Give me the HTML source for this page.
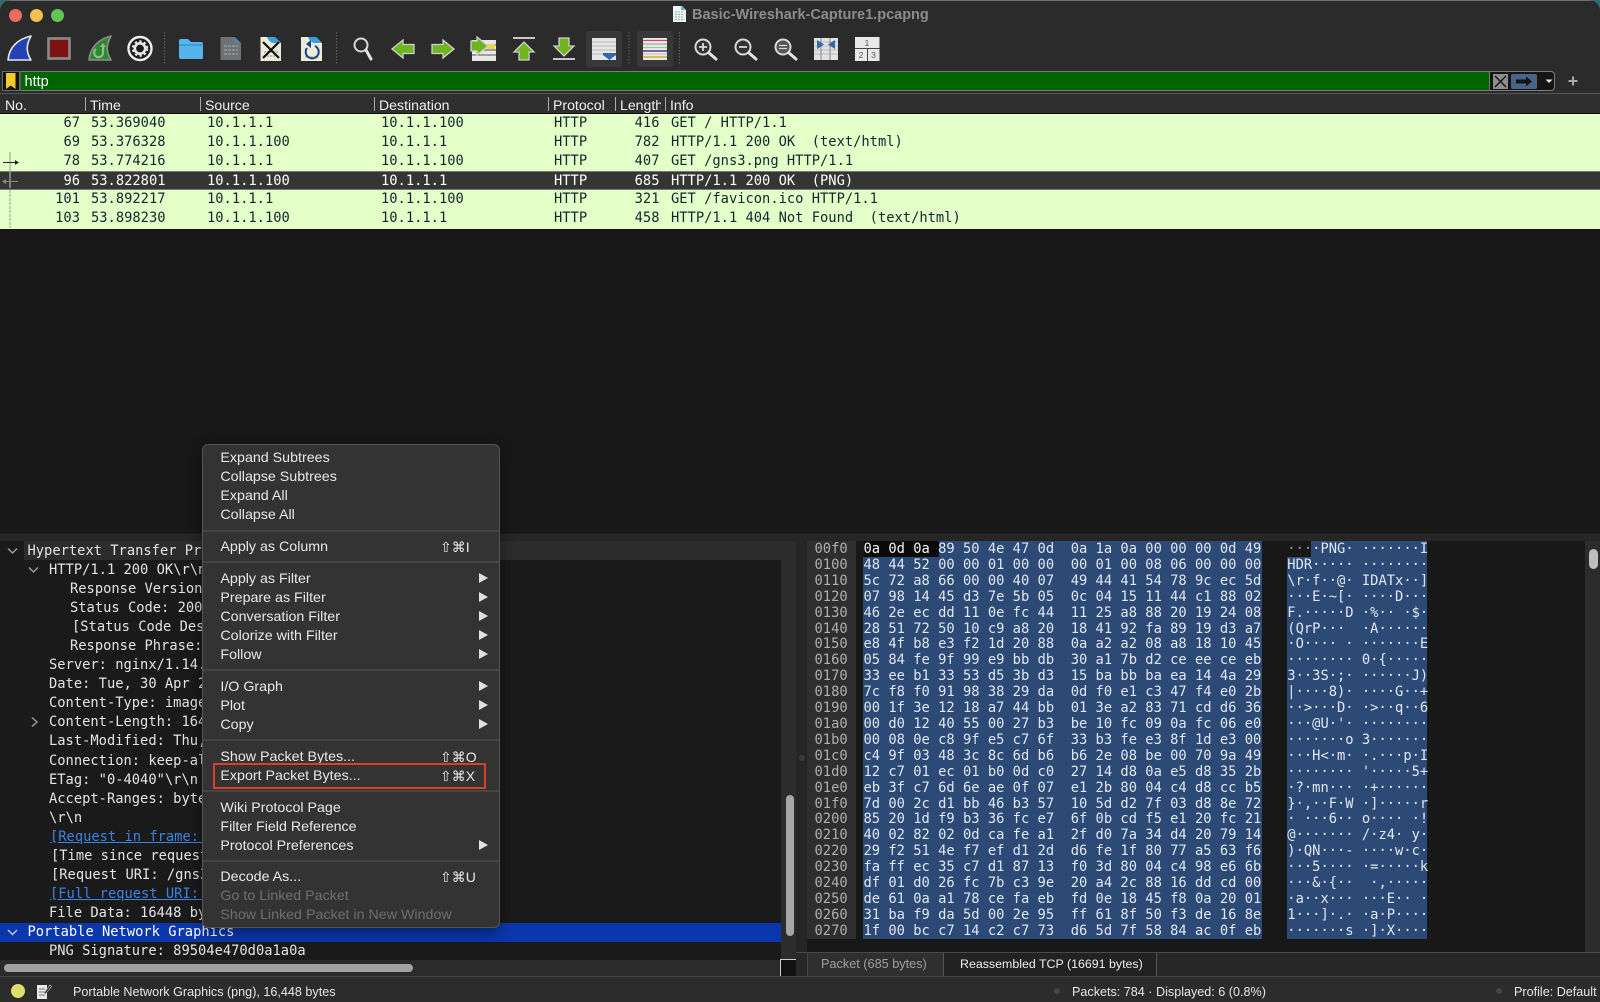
<!DOCTYPE html>
<html><head><meta charset="utf-8"><title>Basic-Wireshark-Capture1.pcapng</title>
<style>
html,body{margin:0;padding:0;background:#2f6b6b;width:1600px;height:1002px;overflow:hidden;}
#w{position:relative;width:1600px;height:1002px;overflow:hidden;background:#2b2b2b;border-radius:11px 11px 0 0;font-family:"Liberation Sans",sans-serif;}
.a{position:absolute;}
.m{font-family:"DejaVu Sans Mono","Liberation Mono",monospace;font-size:13.75px;white-space:pre;}
.h{position:absolute;top:95px;height:18px;line-height:20px;font-size:14.1px;color:#f0f0f0;}
.s{position:absolute;top:97px;width:1px;height:14px;background:#a8a8a8;}
.r{position:absolute;left:0;width:1600px;height:19.1px;line-height:19.1px;background:#e4ffc7;color:#12272e;}
.r span{position:absolute;top:0;}
.r .n{left:0;width:80px;text-align:right;}
.r .t{left:91px;}.r .src{left:207px;}.r .d{left:381px;}.r .p{left:554px;}
.r .l{left:600px;width:59.5px;text-align:right;}.r .i{left:671px;}
.r.sel{background:#353535;color:#fff;border-top:1px solid #777;border-bottom:1px solid #777;box-sizing:border-box;line-height:18px;height:19px;}
#tree{white-space:normal;}
#tree div{position:relative;height:19.1px;line-height:19.1px;color:#e3e3e3;}
#tree div span{position:absolute;top:0;white-space:pre;}
#tree .lnk{color:#3b83e6;text-decoration:underline;}
#menu{position:absolute;left:202px;top:444px;width:298px;height:484px;background:#333;border:1px solid #555;border-radius:6px;box-sizing:border-box;box-shadow:0 4px 14px rgba(0,0,0,.45);}
.mi{position:absolute;left:17.4px;height:19px;line-height:19px;font-size:14.25px;color:#e8e8e8;white-space:nowrap;}
.mi.dis{color:#6e6e6e;}
.ms{position:absolute;left:0;width:296px;height:2px;background:#444;}
.ar{position:absolute;left:276px;width:0;height:0;border-left:9px solid #e0e0e0;border-top:5px solid transparent;border-bottom:5px solid transparent;}
.sc{position:absolute;left:237px;height:19px;line-height:19px;font-size:14px;color:#e8e8e8;font-family:"Liberation Sans","DejaVu Sans",sans-serif;white-space:nowrap;}
.hx{position:absolute;line-height:15.9px;color:#dfe6ef;font-size:13.78px;margin:0;}
.st{position:absolute;top:980px;height:22px;line-height:24px;font-size:12.6px;color:#e6e6e6;white-space:nowrap;}
</style></head><body>
<div id="w">
<!-- title bar -->
<div class="a" style="left:0;top:0;width:1600px;height:1px;background:#6e6e6e"></div>
<div class="a" style="left:8.5px;top:8.5px;width:13px;height:13px;border-radius:50%;background:#ec6a5e"></div>
<div class="a" style="left:29.5px;top:8.5px;width:13px;height:13px;border-radius:50%;background:#f4bf4f"></div>
<div class="a" style="left:50.5px;top:8.5px;width:13px;height:13px;border-radius:50%;background:#61c554"></div>
<svg class="a" style="left:672px;top:5px" width="15" height="18" viewBox="0 0 15 18"><path d="M1 1H10L14 5V17H1Z" fill="#eef3f5"/><path d="M9 1L14 5H9Z" fill="#5fb0e0"/><path d="M3 7H12M3 9.5H12M3 12H12M3 14.5H12" stroke="#9aa" stroke-width="1" stroke-dasharray="2 1"/></svg>
<div class="a" style="left:692px;top:6px;height:19px;line-height:19px;font-size:14.5px;font-weight:bold;color:#8c8c8c;white-space:nowrap">Basic-Wireshark-Capture1.pcapng</div>

<!-- toolbar -->
<div class="a" style="left:586px;top:31px;width:36px;height:36px;background:#383838;border-radius:3px"></div>
<div class="a" style="left:637px;top:31px;width:36px;height:36px;background:#383838;border-radius:3px"></div>
<svg class="a" style="left:0;top:25px" width="900" height="46" viewBox="0 25 900 46">
<!-- shark -->
<path d="M8 60C9 47 18 39 31 36C26 45 26 52 31 60Z" fill="#2342b5" stroke="#e6e6e6" stroke-width="1.6" stroke-linejoin="round"/>
<!-- stop -->
<rect x="48.5" y="38.5" width="21" height="20" fill="#7d1212" stroke="#8b8b8b" stroke-width="2.6"/>
<!-- restart -->
<path d="M89 60C90 47 99 39 111 36C106 45 106 52 111 60Z" fill="#2c8a2c" stroke="#8e8e8e" stroke-width="1.6" stroke-linejoin="round"/>
<path d="M103 46V52A4.500 4.500 0 1 1 96 49" fill="none" stroke="#8fbc8f" stroke-width="2.2"/>
<path d="M100 47L103 43L106 47Z" fill="#8fbc8f"/>
<!-- gear -->
<circle cx="140" cy="48.5" r="11.5" fill="#1d1d1d" stroke="#efefef" stroke-width="2.4"/>
<circle cx="140" cy="48.5" r="5.2" fill="none" stroke="#e8e8e8" stroke-width="2.6"/>
<circle cx="140" cy="48.5" r="7.2" fill="none" stroke="#e8e8e8" stroke-width="2" stroke-dasharray="2.4 2.3"/>
<!-- seps -->
<path d="M164.500 32V65M336.500 32V65M629 32V65M679.500 32V65" stroke="#606060" stroke-width="1" stroke-dasharray="1.500 1.500"/>
<!-- folder -->
<path d="M179 41Q179 39 181 39H188L191 42H201Q203 42 203 44V58Q203 59 201 59H181Q179 59 179 57Z" fill="#55b4ec"/>
<path d="M179 44H203V46H179Z" fill="#3f9cd8"/>
<!-- gray file -->
<path d="M220.500 37H235L241 43V60H220.500Z" fill="#6e7272"/><path d="M233 37L241 43H233Z" fill="#4a86a8"/>
<path d="M224 46H238M224 50H238M224 54H238" stroke="#8d9090" stroke-width="2" stroke-dasharray="3 1"/>
<!-- X file -->
<path d="M260.500 37H275L281 43V61H260.500Z" fill="#ececd8"/><path d="M267 37H275L281 43H273Q269 42 267 37Z" fill="#39a0d8"/>
<path d="M264 52H278M264 56H278" stroke="#aaa" stroke-width="1.500" stroke-dasharray="2 1"/>
<path d="M263 42L279 58M279 42L263 58" stroke="#111" stroke-width="2.200"/>
<!-- reload file -->
<path d="M301 37H316L322 43V61H301Z" fill="#ececd8"/><path d="M308 37H316L322 43H314Q310 42 308 37Z" fill="#39a0d8"/>
<path d="M305 57H318" stroke="#aaa" stroke-width="1.500" stroke-dasharray="2 1"/>
<path d="M315 46A6.500 6.500 0 1 1 307 48" fill="none" stroke="#16448c" stroke-width="2"/>
<path d="M311 40L306 44L311 48Z" fill="#16448c"/>
<!-- search -->
<circle cx="361" cy="45" r="6.500" fill="#2c2c2c" stroke="#d8d8d8" stroke-width="2"/>
<path d="M366 50L371 59" stroke="#e4e4e4" stroke-width="3" stroke-linecap="round"/>
<!-- back/forward -->
<path d="M392 49L403 40V44.500H414V53.500H403V58Z" fill="#6eb51e" stroke="#d0d0d0" stroke-width="1.300"/>
<path d="M454 49L443 40V44.500H432V53.500H443V58Z" fill="#6eb51e" stroke="#d0d0d0" stroke-width="1.300"/>
<!-- go to packet -->
<rect x="472" y="40" width="24" height="21" fill="#e8e8e8"/>
<path d="M472 45H496M472 50H496M472 55H496" stroke="#555" stroke-width="1"/>
<rect x="487" y="44" width="8" height="5" fill="#e8d84a"/>
<path d="M488 46L477 37V41H471V51H477V55Z" fill="#6eb51e" stroke="#d0d0d0" stroke-width="1.300"/>
<!-- top / bottom -->
<path d="M513 38H535" stroke="#c8c8c8" stroke-width="2"/>
<path d="M524 42L534 52H529V60H519V52H514Z" fill="#6eb51e" stroke="#d0d0d0" stroke-width="1.300"/>
<path d="M553 59H575" stroke="#c8c8c8" stroke-width="2"/>
<path d="M564 56L574 46H569V38H559V46H554Z" fill="#6eb51e" stroke="#d0d0d0" stroke-width="1.300"/>
<!-- autoscroll -->
<rect x="592" y="38" width="24" height="22" fill="#e6e6e6"/>
<path d="M592 42H616M592 46H616M592 50H616M592 54H616" stroke="#bbb" stroke-width="1"/>
<path d="M603 55H616L609.500 60Z" fill="#2f68ad"/><rect x="603" y="53" width="13" height="2.500" fill="#2f68ad"/>
<!-- colorize -->
<rect x="643" y="38" width="24" height="22" fill="#eaeaea"/>
<path d="M643 40.500H667" stroke="#cc4a4a" stroke-width="1.300"/><path d="M643 44H667" stroke="#8fa8d8" stroke-width="1.300"/>
<path d="M643 47.500H667" stroke="#9ccf7c" stroke-width="1.300"/><path d="M643 51H667" stroke="#2a1a6a" stroke-width="1.300"/>
<path d="M643 54H667" stroke="#bbb" stroke-width="1"/><path d="M643 57H667" stroke="#d6a820" stroke-width="1.600"/>
<!-- zooms -->
<circle cx="703" cy="47" r="7.500" fill="#333" stroke="#d8d8d8" stroke-width="2"/><path d="M699 47H707M703 43V51" stroke="#d8d8d8" stroke-width="1.800"/><path d="M709 53L716 59" stroke="#e4e4e4" stroke-width="3" stroke-linecap="round"/>
<circle cx="743" cy="47" r="7.500" fill="#333" stroke="#d8d8d8" stroke-width="2"/><path d="M739 47H747" stroke="#d8d8d8" stroke-width="1.800"/><path d="M749 53L756 59" stroke="#e4e4e4" stroke-width="3" stroke-linecap="round"/>
<circle cx="783" cy="47" r="7.500" fill="#555" stroke="#d8d8d8" stroke-width="2"/><path d="M779 45.500H787M779 48.500H787" stroke="#d8d8d8" stroke-width="1.300"/><path d="M789 53L796 59" stroke="#e4e4e4" stroke-width="3" stroke-linecap="round"/>
<!-- resize -->
<rect x="814" y="38" width="24" height="22" fill="#e2e2e2"/><path d="M814 42H838M814 46H838M814 50H838M814 54H838" stroke="#bbb" stroke-width="1"/>
<path d="M821 38V60M830 38V60" stroke="#888" stroke-width="1"/>
<path d="M817 40L824 44.500L817 49ZM835 40L828 44.500L835 49Z" fill="#2f68ad"/>
<!-- panes -->
<rect x="855" y="37" width="24.500" height="24" fill="#e8e8e8"/><path d="M855 48.500H880M867.500 48.500V61" stroke="#444" stroke-width="1"/>
<text x="867" y="46" font-size="8.500" fill="#555" text-anchor="middle" font-family="Liberation Sans">1</text>
<text x="861" y="58" font-size="8.500" fill="#555" text-anchor="middle" font-family="Liberation Sans">2</text>
<text x="873.500" y="58" font-size="8.500" fill="#555" text-anchor="middle" font-family="Liberation Sans">3</text>
</svg>

<!-- filter -->
<div class="a" style="left:2px;top:71px;width:18px;height:20px;background:#111;border:1px solid #6a6a6a;box-sizing:border-box"></div>
<svg class="a" style="left:6px;top:73px" width="10" height="17" viewBox="0 0 10 17"><path d="M0 0H9.500V16L4.800 12.500L0 16Z" fill="#f3c92a"/></svg>
<div class="a" style="left:20px;top:71px;width:1470px;height:20px;background:#006400;border:1px solid #7a7a7a;border-left:1px solid #555;box-sizing:border-box;font-size:14.5px;line-height:21px;color:#fff;padding-left:3.5px">http</div>
<div class="a" style="left:1490px;top:71px;width:65px;height:20px;background:#151515;border:1px solid #7a7a7a;border-left:0;border-radius:0 4px 4px 0;box-sizing:border-box"></div>
<svg class="a" style="left:1493px;top:73px" width="64" height="17" viewBox="0 0 64 17">
<rect x="0" y="1" width="15" height="15" fill="#8e8e8e"/><path d="M2 3L13 14M13 3L2 14" stroke="#141414" stroke-width="1.400"/>
<rect x="18" y="1" width="26" height="15" rx="2" fill="#4a6488"/><path d="M23 6.500H33V3.500L39 8.500L33 13.500V10.500H23Z" fill="#141414"/>
<path d="M52.500 6.500H59.500L56 10Z" fill="#e8e8e8"/>
</svg>
<svg class="a" style="left:1567px;top:75px" width="12" height="12" viewBox="0 0 12 12"><path d="M6 1.500V10.500M1.500 6H10.500" stroke="#a8a8a8" stroke-width="2"/></svg>

<!-- header -->
<div class="a" style="left:0;top:93px;width:1600px;height:20px;background:#2f2f2f;border-top:1px solid #555;box-sizing:border-box"></div>
<div class="a" style="left:0;top:113px;width:1600px;height:1px;background:#0c0c0c"></div>
<div class="h" style="left:5px">No.</div><div class="s" style="left:85px"></div>
<div class="h" style="left:90px">Time</div><div class="s" style="left:200px"></div>
<div class="h" style="left:205px">Source</div><div class="s" style="left:374px"></div>
<div class="h" style="left:379px">Destination</div><div class="s" style="left:548px"></div>
<div class="h" style="left:553px">Protocol</div><div class="s" style="left:615px"></div>
<div class="h" style="left:620px;width:41px;overflow:hidden;white-space:nowrap">Length</div><div class="s" style="left:665px"></div>
<div class="h" style="left:670px">Info</div>

<!-- packet list -->
<div class="a" style="left:0;top:229px;width:1600px;height:304px;background:#181818"></div>
<div class="r m" style="top:113.500px"><span class="n">67</span><span class="t">53.369040</span><span class="src">10.1.1.1</span><span class="d">10.1.1.100</span><span class="p">HTTP</span><span class="l">416</span><span class="i">GET / HTTP/1.1</span></div>
<div class="r m" style="top:132.600px"><span class="n">69</span><span class="t">53.376328</span><span class="src">10.1.1.100</span><span class="d">10.1.1.1</span><span class="p">HTTP</span><span class="l">782</span><span class="i">HTTP/1.1 200 OK  (text/html)</span></div>
<div class="r m" style="top:151.700px"><span class="n">78</span><span class="t">53.774216</span><span class="src">10.1.1.1</span><span class="d">10.1.1.100</span><span class="p">HTTP</span><span class="l">407</span><span class="i">GET /gns3.png HTTP/1.1</span></div>
<div class="r m sel" style="top:171px"><span class="n">96</span><span class="t">53.822801</span><span class="src">10.1.1.100</span><span class="d">10.1.1.1</span><span class="p">HTTP</span><span class="l">685</span><span class="i">HTTP/1.1 200 OK  (PNG)</span></div>
<div class="r m" style="top:189.500px"><span class="n">101</span><span class="t">53.892217</span><span class="src">10.1.1.1</span><span class="d">10.1.1.100</span><span class="p">HTTP</span><span class="l">321</span><span class="i">GET /favicon.ico HTTP/1.1</span></div>
<div class="r m" style="top:208.600px;height:20px"><span class="n">103</span><span class="t">53.898230</span><span class="src">10.1.1.100</span><span class="d">10.1.1.1</span><span class="p">HTTP</span><span class="l">458</span><span class="i">HTTP/1.1 404 Not Found  (text/html)</span></div>
<svg class="a" style="left:0;top:150px" width="22" height="80" viewBox="0 0 22 80">
<path d="M10 2V30" stroke="#999" stroke-width="1"/>
<path d="M10 40V78" stroke="#999" stroke-width="1" stroke-dasharray="3 1"/>
<path d="M3 12.500H18" stroke="#222" stroke-width="1"/><path d="M15 10L19 12.500L15 15Z" fill="#222"/>
<path d="M10 22V38" stroke="#999" stroke-width="1.500"/>
<path d="M5 31.500H18" stroke="#888" stroke-width="1"/><path d="M6 29L2 31.500L6 34Z" fill="#888"/>
</svg>

<!-- divider -->
<div class="a" style="left:0;top:533px;width:1600px;height:8px;background:#262626;border-top:1px solid #1c1c1c;box-sizing:border-box"></div>

<!-- tree -->
<div class="a" style="left:0;top:541px;width:781px;height:419px;background:#1a1a1a"></div>
<div class="a" style="left:24px;top:541px;width:757px;height:19px;background:#2c2c2c"></div>
<div class="a" style="left:0;top:923px;width:781px;height:19px;background:#0a37ad"></div>
<div id="tree" class="a m" style="left:0;top:541.500px;width:781px;height:418px;overflow:hidden">
<div><span style="left:27.500px">Hypertext Transfer Protocol</span></div>
<div><span style="left:49px">HTTP/1.1 200 OK\r\n</span></div>
<div><span style="left:70px">Response Version: HTTP/1.1</span></div>
<div><span style="left:70px">Status Code: 200</span></div>
<div><span style="left:72px">[Status Code Description: OK]</span></div>
<div><span style="left:70px">Response Phrase: OK</span></div>
<div><span style="left:49px">Server: nginx/1.14.0</span></div>
<div><span style="left:49px">Date: Tue, 30 Apr 2019</span></div>
<div><span style="left:49px">Content-Type: image/png\r\n</span></div>
<div><span style="left:49px">Content-Length: 16448\r\n</span></div>
<div><span style="left:49px">Last-Modified: Thu, 25</span></div>
<div><span style="left:49px">Connection: keep-alive\r\n</span></div>
<div><span style="left:49px">ETag: "0-4040"\r\n</span></div>
<div><span style="left:49px">Accept-Ranges: bytes\r\n</span></div>
<div><span style="left:49px">\r\n</span></div>
<div><span class="lnk" style="left:50px">[Request in frame: 78]</span></div>
<div><span style="left:51px">[Time since request: 0.0</span></div>
<div><span style="left:51px">[Request URI: /gns3.png]</span></div>
<div><span class="lnk" style="left:50px">[Full request URI: http</span></div>
<div><span style="left:49px">File Data: 16448 bytes</span></div>
<div><span style="left:27.500px;color:#fff">Portable Network Graphics</span></div>
<div><span style="left:49px">PNG Signature: 89504e470d0a1a0a</span></div>
</div>
<svg class="a" style="left:0;top:541px" width="45" height="400" viewBox="0 541 45 400" fill="none" stroke-width="1.500">
<path d="M8 548.500L12.500 553L17 548.500" stroke="#9a9a9a"/>
<path d="M29 567.500L33.500 572L38 567.500" stroke="#9a9a9a"/>
<path d="M32 717.500L37 722L32 726.500" stroke="#9a9a9a"/>
<path d="M8 930L12.500 934.500L17 930" stroke="#b8c8f0"/>
</svg>
<!-- h scrollbar -->
<div class="a" style="left:0;top:960px;width:781px;height:16px;background:#2b2b2b"></div>
<div class="a" style="left:4px;top:964px;width:409px;height:8px;background:#a2a2a2;border-radius:4px"></div>
<!-- v scrollbar -->
<div class="a" style="left:781px;top:541px;width:15px;height:419px;background:#2c2c2c"></div>
<div class="a" style="left:786px;top:795px;width:8px;height:141px;background:#a6a6a6;border-radius:4px"></div>
<div class="a" style="left:780px;top:959px;width:16px;height:17px;background:#111;border-left:1.500px solid #ccc;border-top:1.500px solid #ccc;box-sizing:border-box"></div>
<!-- splitter -->
<div class="a" style="left:796px;top:541px;width:11px;height:411px;background:#252525"></div>
<div class="a" style="left:799px;top:755px;width:6px;height:6px;background:#3c3c3c;border-radius:50%"></div>

<!-- hex pane -->
<div class="a" style="left:807px;top:541px;width:793px;height:411px;background:#181818"></div>
<div class="a" style="left:807px;top:541px;width:49px;height:398px;background:#2e2e2e"></div>
<div class="a" style="left:939px;top:541px;width:323px;height:16px;background:#2c4a75"></div>
<div class="a" style="left:863px;top:557px;width:399px;height:382px;background:#2c4a75"></div>
<div class="a" style="left:1311px;top:541px;width:116px;height:16px;background:#2c4a75"></div>
<div class="a" style="left:1287px;top:557px;width:140px;height:382px;background:#2c4a75"></div>
<div class="a" style="left:864px;top:541px;width:75px;height:16px;background:#0a0a0a"></div>
<pre class="hx m" style="left:814.500px;top:542px;color:#b0b0b0">00f0
0100
0110
0120
0130
0140
0150
0160
0170
0180
0190
01a0
01b0
01c0
01d0
01e0
01f0
0200
0210
0220
0230
0240
0250
0260
0270</pre>
<pre class="hx m" style="left:863.500px;top:542px"><span style="color:#f4f4f4">0a 0d 0a </span>89 50 4e 47 0d  0a 1a 0a 00 00 00 0d 49
48 44 52 00 00 01 00 00  00 01 00 08 06 00 00 00
5c 72 a8 66 00 00 40 07  49 44 41 54 78 9c ec 5d
07 98 14 45 d3 7e 5b 05  0c 04 15 11 44 c1 88 02
46 2e ec dd 11 0e fc 44  11 25 a8 88 20 19 24 08
28 51 72 50 10 c9 a8 20  18 41 92 fa 89 19 d3 a7
e8 4f b8 e3 f2 1d 20 88  0a a2 a2 08 a8 18 10 45
05 84 fe 9f 99 e9 bb db  30 a1 7b d2 ce ee ce eb
33 ee b1 33 53 d5 3b d3  15 ba bb ba ea 14 4a 29
7c f8 f0 91 98 38 29 da  0d f0 e1 c3 47 f4 e0 2b
00 1f 3e 12 18 a7 44 bb  01 3e a2 83 71 cd d6 36
00 d0 12 40 55 00 27 b3  be 10 fc 09 0a fc 06 e0
00 08 0e c8 9f e5 c7 6f  33 b3 fe e3 8f 1d e3 00
c4 9f 03 48 3c 8c 6d b6  b6 2e 08 be 00 70 9a 49
12 c7 01 ec 01 b0 0d c0  27 14 d8 0a e5 d8 35 2b
eb 3f c7 6d 6e ae 0f 07  e1 2b 80 04 c4 d8 cc b5
7d 00 2c d1 bb 46 b3 57  10 5d d2 7f 03 d8 8e 72
85 20 1d f9 b3 36 fc e7  6f 0b cd f5 e1 20 fc 21
40 02 82 02 0d ca fe a1  2f d0 7a 34 d4 20 79 14
29 f2 51 4e f7 ef d1 2d  d6 fe 1f 80 77 a5 63 f6
fa ff ec 35 c7 d1 87 13  f0 3d 80 04 c4 98 e6 6b
df 01 d0 26 fc 7b c3 9e  20 a4 2c 88 16 dd cd 00
de 61 0a a1 78 ce fa eb  fd 0e 18 45 f8 0a 20 01
31 ba f9 da 5d 00 2e 95  ff 61 8f 50 f3 de 16 8e
1f 00 bc c7 14 c2 c7 73  d6 5d 7f 58 84 ac 0f eb</pre>
<pre class="hx m" style="left:1287.300px;top:542px"><span style="color:#9a9a9a">···</span>·PNG· ·······I
HDR····· ········
\r·f··@· IDATx··]
···E·~[· ····D···
F.·····D ·%·· ·$·
(QrP···  ·A······
·O···· · ·······E
········ 0·{·····
3··3S·;· ······J)
|····8)· ····G··+
··>···D· ·>··q··6
···@U·'· ········
·······o 3·······
···H&lt;·m· ·.···p·I
········ '·····5+
·?·mn··· ·+······
}·,··F·W ·]·····r
· ···6·· o···· ·!
@······· /·z4· y·
)·QN···- ····w·c·
···5···· ·=·····k
···&amp;·{··  ·,·····
·a··x··· ···E·· ·
1···]·.· ·a·P····
·······s ·]·X····</pre>
<!-- hex right scrollbar -->
<div class="a" style="left:1585px;top:541px;width:15px;height:411px;background:#2c2c2c"></div>
<div class="a" style="left:1589px;top:549px;width:9px;height:20px;background:#bdbdbd;border-radius:4.500px"></div>

<!-- tabs -->
<div class="a" style="left:796px;top:952px;width:804px;height:24px;background:#272727;border-top:1px solid #4a4a4a;box-sizing:border-box"></div>
<div class="a" style="left:807px;top:952px;width:137px;height:24px;background:#2f2f2f;border-left:1px solid #444;border-right:1px solid #555;border-top:1px solid #4a4a4a;box-sizing:border-box;font-size:12.7px;line-height:23px;color:#a0a0a0;padding-left:13px;white-space:nowrap">Packet (685 bytes)</div>
<div class="a" style="left:944px;top:952px;width:213px;height:24px;background:#222;border-right:1px solid #555;border-top:1px solid #4a4a4a;box-sizing:border-box;font-size:12.4px;line-height:23px;color:#eee;padding-left:16px;white-space:nowrap">Reassembled TCP (16691 bytes)</div>

<!-- status bar -->
<div class="a" style="left:0;top:976px;width:1600px;height:26px;background:#2c2c2c;border-top:1px solid #444;box-sizing:border-box"></div>
<div class="a" style="left:11px;top:984px;width:14px;height:14px;border-radius:50%;background:#dede6a"></div>
<svg class="a" style="left:36px;top:983px" width="16" height="17" viewBox="0 0 16 17"><path d="M1 2H11V16H1Z" fill="#e8e8e8"/><path d="M3 6H9M3 9H9M3 12H9" stroke="#777" stroke-width="1"/><path d="M8 10L14 2L15.500 3.500L9.500 11Z" fill="#333" stroke="#ccc" stroke-width=".6"/></svg>
<div class="st" style="left:73px">Portable Network Graphics (png), 16,448 bytes</div>
<div class="a" style="left:1054px;top:988px;width:6px;height:6px;background:#444;border-radius:50%"></div>
<div class="st" style="left:1072px">Packets: 784 · Displayed: 6 (0.8%)</div>
<div class="a" style="left:1496px;top:988px;width:6px;height:6px;background:#444;border-radius:50%"></div>
<div class="st" style="left:1514px">Profile: Default</div>

<!-- context menu -->
<div id="menu">
<div class="mi" style="top:4px">Expand Subtrees</div>
<div class="mi" style="top:23px">Collapse Subtrees</div>
<div class="mi" style="top:42px">Expand All</div>
<div class="mi" style="top:61px">Collapse All</div>
<div class="ms" style="top:85px"></div>
<div class="mi" style="top:92.500px">Apply as Column</div><div class="sc" style="top:92.500px">⇧⌘I</div>
<div class="ms" style="top:116px"></div>
<div class="mi" style="top:124.500px">Apply as Filter</div><div class="ar" style="top:128px"></div>
<div class="mi" style="top:143.500px">Prepare as Filter</div><div class="ar" style="top:147px"></div>
<div class="mi" style="top:162.500px">Conversation Filter</div><div class="ar" style="top:166px"></div>
<div class="mi" style="top:181.500px">Colorize with Filter</div><div class="ar" style="top:185px"></div>
<div class="mi" style="top:200.500px">Follow</div><div class="ar" style="top:204px"></div>
<div class="ms" style="top:224px"></div>
<div class="mi" style="top:232.500px">I/O Graph</div><div class="ar" style="top:236px"></div>
<div class="mi" style="top:251.500px">Plot</div><div class="ar" style="top:255px"></div>
<div class="mi" style="top:270.500px">Copy</div><div class="ar" style="top:274px"></div>
<div class="ms" style="top:294px"></div>
<div class="mi" style="top:302.500px">Show Packet Bytes...</div><div class="sc" style="top:302.500px">⇧⌘O</div>
<div class="mi" style="top:321.500px">Export Packet Bytes...</div><div class="sc" style="top:321.500px">⇧⌘X</div>
<div class="ms" style="top:345px"></div>
<div class="mi" style="top:353.500px">Wiki Protocol Page</div>
<div class="mi" style="top:372.500px">Filter Field Reference</div>
<div class="mi" style="top:391.500px">Protocol Preferences</div><div class="ar" style="top:395px"></div>
<div class="ms" style="top:415px"></div>
<div class="mi" style="top:423px">Decode As...</div><div class="sc" style="top:423px">⇧⌘U</div>
<div class="mi dis" style="top:442px">Go to Linked Packet</div>
<div class="mi dis" style="top:461px">Show Linked Packet in New Window</div>
</div>
<div class="a" style="left:213px;top:763px;width:273px;height:26px;border:2.500px solid #d8402a;box-sizing:border-box"></div>
</div>
</body></html>
